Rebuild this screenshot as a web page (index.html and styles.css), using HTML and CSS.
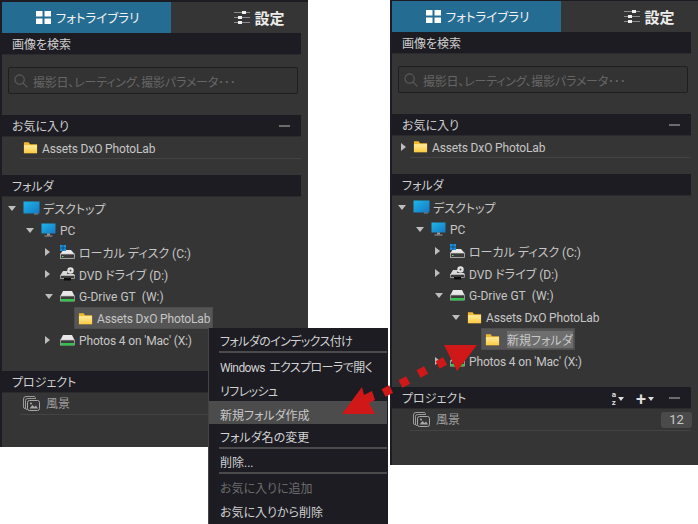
FILE: index.html
```html
<!DOCTYPE html>
<html lang="ja">
<head>
<meta charset="utf-8">
<title>フォトライブラリ</title>
<link rel="stylesheet" href="styles.css">
</head>
<body>
<svg class="defs" width="0" height="0">
  <defs>
    <linearGradient id="gf" x1="0" y1="0" x2="0" y2="1"><stop offset="0" stop-color="#ffeb9c"/><stop offset="1" stop-color="#fbcb42"/></linearGradient>
    <linearGradient id="gs" x1="0" y1="0" x2="1" y2="1"><stop offset="0" stop-color="#1fb6e8"/><stop offset="1" stop-color="#1578c4"/></linearGradient>
    <symbol id="folder" viewBox="0 0 16 13"><path d="M1 1h5l1.500 2H15v9.500H1z" fill="#f2b92e"/><path d="M1 4h14v8.500H1z" fill="url(#gf)"/></symbol>
    <symbol id="desk" viewBox="0 0 17 14"><rect x="0.5" y="0.5" width="16" height="12" fill="url(#gs)"/><rect x="11" y="12.5" width="4" height="1" fill="#8a8a8a"/></symbol>
    <symbol id="pc" viewBox="0 0 15 14"><rect x="0.5" y="0.5" width="14" height="10" fill="url(#gs)"/><rect x="6" y="10.5" width="3" height="2" fill="#9a9a9a"/><rect x="3.5" y="12.5" width="8" height="1" fill="#9a9a9a"/></symbol>
    <symbol id="drive" viewBox="0 0 15 12"><path d="M3 1h9l2.500 5h-14z" fill="#e8e8e8"/><rect x="0.5" y="6" width="14" height="5" fill="#3c3c3c" stroke="#bdbdbd" stroke-width="0.7"/><rect x="1" y="9" width="13" height="2.400" fill="#35c24c"/></symbol>
    <symbol id="cdrive" viewBox="0 0 15 14"><path d="M3 5h8l3.500 4h-14z" fill="#e8e8e8"/><rect x="0.5" y="9" width="14" height="4.500" fill="#3a3a3a" stroke="#cfcfcf" stroke-width="0.7"/><rect x="2" y="11" width="1.500" height="1" fill="#6fd07a"/><rect x="0" y="0" width="6" height="6" fill="#1e8ed8"/><path d="M3 0v6M0 3h6" stroke="#123" stroke-width="0.5"/></symbol>
    <symbol id="dvd" viewBox="0 0 15 14"><circle cx="10.500" cy="3.500" r="3.200" fill="#e4e4e4"/><circle cx="10.500" cy="3.500" r="1" fill="#444"/><path d="M3 4h5l-1 3h7l1 2H0z" fill="#d8d8d8"/><rect x="0.5" y="8.500" width="14" height="3" fill="#3a3a3a" stroke="#bdbdbd" stroke-width="0.7"/><rect x="4" y="11" width="7" height="2.500" fill="#0c0c0c"/></symbol>
    <symbol id="stack" viewBox="0 0 17 15"><path d="M3 12.500H2a1.500 1.500 0 0 1-1.500-1.500V3A2.500 2.500 0 0 1 3 .5h8a1.500 1.500 0 0 1 1.500 1" fill="none" stroke="#9a9a9a"/><path d="M4.500 13.500H4A1.500 1.500 0 0 1 2.500 12V4.500A2 2 0 0 1 4.500 2.500h8.500" fill="none" stroke="#9a9a9a"/><rect x="4.500" y="4.500" width="12" height="10" rx="2" fill="#353535" stroke="#a8a8a8"/><path d="M6.500 12.500l3-3.500 2 2 1.500-1.500 2 3z" fill="#a8a8a8"/><circle cx="8" cy="7.500" r="1" fill="#a8a8a8"/></symbol>
    <symbol id="sliders" viewBox="0 0 16 13"><path d="M0 1.500h16M0 6.500h16M0 11.500h16" stroke="#8c8c8c" stroke-width="1"/><rect x="8" y="0" width="4" height="3" fill="#f0f0f0"/><rect x="4" y="5" width="4" height="3" fill="#f0f0f0"/><rect x="4" y="10" width="4" height="3" fill="#f0f0f0"/></symbol>
  </defs>
</svg>

<main class="stage">
  <section class="panel panel-a">
    <nav class="tabs">
      <div class="tab tab-on">
        <svg class="tab-icon" viewBox="0 0 15 13"><path d="M0 0h6.500v5.500H0zM8.500 0H15v5.500H8.500zM0 7.500h6.500V13H0zM8.500 7.500H15V13H8.500z" fill="#fff"/></svg>
        <span>フォトライブラリ</span>
      </div>
      <div class="tab tab-off">
        <svg class="tab-icon wide"><use href="#sliders"/></svg>
        <b>設定</b>
      </div>
    </nav>
    <header class="head"><span>画像を検索</span></header>
    <div class="search">
      <svg class="glass" viewBox="0 0 15 15"><circle cx="6" cy="6" r="5" fill="none" stroke="#5c5c5c" stroke-width="1.200"/><path d="M9.800 9.800l4.500 4.500" stroke="#5c5c5c" stroke-width="1.200"/></svg>
      <span>撮影日、レーティング、撮影パラメータ･･･</span>
    </div>
    <header class="head head-fav"><span>お気に入り</span><i class="minus"></i></header>
    <div class="row fav">
      <svg class="ico folder"><use href="#folder"/></svg><span class="lat narrow">Assets DxO PhotoLab</span>
    </div>
    <header class="head head-dir"><span>フォルダ</span></header>
    <ul class="tree">
      <li class="node l0"><i class="tw open"></i><svg class="ico desk"><use href="#desk"/></svg><span>デスクトップ</span></li>
      <li class="node l1"><i class="tw open"></i><svg class="ico pc"><use href="#pc"/></svg><span class="lat">PC</span></li>
      <li class="node l2"><i class="tw"></i><svg class="ico disk"><use href="#cdrive"/></svg><span>ローカル ディスク (C:)</span></li>
      <li class="node l2"><i class="tw"></i><svg class="ico disk"><use href="#dvd"/></svg><span>DVD ドライブ (D:)</span></li>
      <li class="node l2"><i class="tw open"></i><svg class="ico disk"><use href="#drive"/></svg><span class="lat">G-Drive GT&nbsp; (W:)</span></li>
      <li class="node selected"><svg class="ico folder"><use href="#folder"/></svg><span class="lat narrow">Assets DxO PhotoLab</span></li>
      <li class="node l2"><i class="tw"></i><svg class="ico disk"><use href="#drive"/></svg><span class="lat narrow">Photos 4 on 'Mac' (X:)</span></li>
    </ul>
    <header class="head head-proj"><span>プロジェクト</span></header>
    <div class="row proj">
      <svg class="ico stack"><use href="#stack"/></svg><span class="dim">風景</span>
    </div>
  </section>

  <section class="panel panel-b">
    <nav class="tabs">
      <div class="tab tab-on">
        <svg class="tab-icon" viewBox="0 0 15 13"><path d="M0 0h6.500v5.500H0zM8.500 0H15v5.500H8.500zM0 7.500h6.500V13H0zM8.500 7.500H15V13H8.500z" fill="#fff"/></svg>
        <span>フォトライブラリ</span>
      </div>
      <div class="tab tab-off">
        <svg class="tab-icon wide"><use href="#sliders"/></svg>
        <b>設定</b>
      </div>
    </nav>
    <header class="head"><span>画像を検索</span></header>
    <div class="search">
      <svg class="glass" viewBox="0 0 15 15"><circle cx="6" cy="6" r="5" fill="none" stroke="#5c5c5c" stroke-width="1.200"/><path d="M9.800 9.800l4.500 4.500" stroke="#5c5c5c" stroke-width="1.200"/></svg>
      <span>撮影日、レーティング、撮影パラメータ･･･</span>
    </div>
    <header class="head head-fav"><span>お気に入り</span><i class="minus"></i></header>
    <div class="row fav fav-tw">
      <i class="tw"></i><svg class="ico folder"><use href="#folder"/></svg><span class="lat narrow">Assets DxO PhotoLab</span>
    </div>
    <header class="head head-dir"><span>フォルダ</span></header>
    <ul class="tree">
      <li class="node l0"><i class="tw open"></i><svg class="ico desk"><use href="#desk"/></svg><span>デスクトップ</span></li>
      <li class="node l1"><i class="tw open"></i><svg class="ico pc"><use href="#pc"/></svg><span class="lat">PC</span></li>
      <li class="node l2"><i class="tw"></i><svg class="ico disk"><use href="#cdrive"/></svg><span>ローカル ディスク (C:)</span></li>
      <li class="node l2"><i class="tw"></i><svg class="ico disk"><use href="#dvd"/></svg><span>DVD ドライブ (D:)</span></li>
      <li class="node l2"><i class="tw open"></i><svg class="ico disk"><use href="#drive"/></svg><span class="lat">G-Drive GT&nbsp; (W:)</span></li>
      <li class="node l3b"><i class="tw open"></i><svg class="ico folder"><use href="#folder"/></svg><span class="lat narrow">Assets DxO PhotoLab</span></li>
      <li class="node selected sel-new"><svg class="ico folder"><use href="#folder"/></svg><span class="editing">新規フォルダ</span></li>
      <li class="node l2"><i class="tw"></i><svg class="ico disk"><use href="#drive"/></svg><span class="lat narrow">Photos 4 on 'Mac' (X:)</span></li>
    </ul>
    <header class="head head-proj-b"><span>プロジェクト</span>
      <span class="tools">
        <span class="sort"><span class="az"><span>a</span><span>z</span></span><i class="caret"></i></span>
        <span class="add"><span class="plus">+</span><i class="caret"></i></span>
        <i class="minus"></i>
      </span>
    </header>
    <div class="row proj">
      <svg class="ico stack"><use href="#stack"/></svg><span class="dim">風景</span><span class="badge">12</span>
    </div>
  </section>

  <ul class="menu">
    <li class="item sep tight">フォルダのインデックス付け</li>
    <li class="item win">Windows エクスプローラで開く</li>
    <li class="item tight">リフレッシュ</li>
    <li class="item hot">新規フォルダ作成</li>
    <li class="item sep">フォルダ名の変更</li>
    <li class="item sep">削除...</li>
    <li class="item off">お気に入りに追加</li>
    <li class="item">お気に入りから削除</li>
  </ul>

  <svg class="arrow" viewBox="0 0 698 524" width="698" height="524">
    <path d="M342 414L362 387 364 395 372 391 375 400 369 403 375 414z" fill="#d01818"/>
    <path d="M444 345H477L457 371z" fill="#d01818"/>
    <rect x="383" y="387" width="8.500" height="8.500" transform="rotate(-28 387 391)" fill="#d01818"/>
    <rect x="400" y="378" width="8.500" height="8.500" transform="rotate(-28 404 382)" fill="#d01818"/>
    <rect x="418" y="368" width="8.500" height="8.500" transform="rotate(-28 422 372)" fill="#d01818"/>
    <rect x="437" y="359" width="8.500" height="8.500" transform="rotate(-28 441 363)" fill="#d01818"/>
  </svg>
</main>
</body>
</html>
```
FILE: styles.css
```css
* { box-sizing: border-box; }
html, body { margin: 0; padding: 0; background: #fff; }
body { width: 698px; height: 524px; overflow: hidden; font-family: "Roboto", "Noto Sans CJK JP", sans-serif; font-size: 12px; color: #c6c6c6; font-feature-settings: "palt"; }
.defs { position: absolute; }
.stage { position: relative; width: 698px; height: 524px; overflow: hidden; }

.panel { position: absolute; width: 308px; background: #353535; border-left: 2px solid #1c1c22; border-top: 2px solid #1c1c22; }
.panel-a { left: 0; top: 0; height: 447px; }
.panel-b { left: 390px; top: -1px; height: 466px; }

.tabs { display: flex; height: 31px; }
.tab { display: flex; align-items: center; justify-content: center; }
.tab-on { width: 169px; gap: 5px; background: #256c92; color: #f2f2f2; font-size: 12.5px; padding-left: 2px; }
.tab-off { flex: 1; gap: 4px; color: #ececec; padding-left: 40px; }
.tab-off b { font-weight: 700; font-size: 15px; }
.tab-icon { width: 15px; height: 13px; }
.tab-icon.wide { width: 16px; }

.head { display: flex; align-items: center; height: 22px; margin-right: 7px; padding: 3px 8px 0 10px; background: #1c1c22; border-bottom: 1px solid #2b2b2d; color: #cfcfcf; line-height: 1; }
.head-fav { margin-top: 21px; }
.head-dir { margin-top: 16px; }
.head-proj { margin-top: 20px; }
.head-proj-b { margin-top: 15px; }
.minus { display: block; width: 11px; height: 2px; background: #6c6c6c; margin-left: auto; margin-right: 3px; margin-top: -2px; }

.search { display: flex; align-items: center; gap: 5px; height: 27px; margin: 12px 10px 0 6px; padding: 1px 0 0 5px; background: #333333; border: 1px solid #1f1f22; border-radius: 2px; color: #666; letter-spacing: -0.2px; }
.glass { width: 14px; height: 14px; flex: none; }

.row { display: flex; align-items: center; height: 22px; margin-right: 7px; border-bottom: 1px solid #434343; }
.fav { margin-left: 18px; padding-left: 3px; }
.fav-tw { position: relative; }
.fav-tw .tw { position: absolute; left: -9px; top: 7px; }
.proj { margin-left: 18px; padding-left: 3px; }
.dim { color: #9e9e9e; margin-bottom: 3px; }
.lat { margin-top: 2px; }
.narrow { letter-spacing: -0.15px; }
.fav .lat { margin-top: 3px; }

.ico { display: block; flex: none; }
.folder { width: 15px; height: 13px; margin-right: 4px; }
.desk { width: 17px; height: 14px; margin-right: 3px; }
.pc { width: 15px; height: 14px; margin-right: 4px; }
.disk { width: 15px; height: 14px; margin-right: 4px; }
.stack { width: 17px; height: 15px; margin-right: 6px; }

.tree { list-style: none; margin: 0; padding: 0; }
.node { display: flex; align-items: center; height: 22px; white-space: nowrap; }
.tw { display: block; flex: none; width: 0; height: 0; border-style: solid; border-width: 4px 0 4px 5px; border-color: transparent transparent transparent #bdbdbd; }
.tw.open { border-width: 5px 4.5px 0 4.5px; border-color: #bdbdbd transparent transparent transparent; }
.node .tw { margin-right: 7px; }
.node .tw:not(.open) { margin-right: 10px; }
.l0 { padding-left: 6px; }
.l1 { padding-left: 24px; }
.l2 { padding-left: 43px; }
.l3b { padding-left: 60px; }
.selected { width: 139px; background: #555; margin-left: 72px; padding-left: 3px; border: 1px solid #4d4d4d; }
.sel-new { width: 94px; margin-left: 89px; }
.editing { background: #6e6e6e; color: #c8c8c8; margin-left: 3px; }

.tools { display: flex; align-items: center; margin-left: auto; }
.tools .minus { margin-left: 15px; }
.sort, .add { display: flex; align-items: center; gap: 2px; color: #e0e0e0; }
.az { display: flex; flex-direction: column; font-size: 8px; line-height: 8px; font-weight: 700; text-align: center; }
.az span { display: block; height: 8px; }
.add { margin-left: 12px; }
.plus { font-size: 18px; font-weight: 500; line-height: 1; }
.caret { display: block; width: 0; height: 0; border-style: solid; border-width: 4px 3px 0 3px; border-color: #dcdcdc transparent transparent transparent; }
.badge { margin-left: auto; margin-right: -1px; width: 31px; height: 16px; line-height: 16px; text-align: center; background: #4a4a4a; border-radius: 3px; color: #c8c8c8; font-size: 13px; }

.menu { position: absolute; left: 208px; top: 328px; width: 180px; height: 196px; margin: 0; padding: 0 1px 0 0; list-style: none; background: #1c1c22; color: #d2d2d2; border-left: 1px solid #444; }
.item { display: flex; align-items: center; height: 24px; padding: 3px 0 0 11px; white-space: nowrap; }
.item.sep { position: relative; height: 25px; padding: 0 0 1px 11px; }
.item.sep::after { content: ""; position: absolute; left: 10px; right: 0; bottom: 0; height: 2px; background: #4a4a4a; }
.item.tight { letter-spacing: -0.6px; }
.item.win { letter-spacing: -0.6px; word-spacing: 2px; }
.item.hot { background: #4c4c4c; height: 23px; color: #c8c8c8; }
.item.off { color: #6d6d6d; }

.arrow { position: absolute; left: 0; top: 0; pointer-events: none; }
```
